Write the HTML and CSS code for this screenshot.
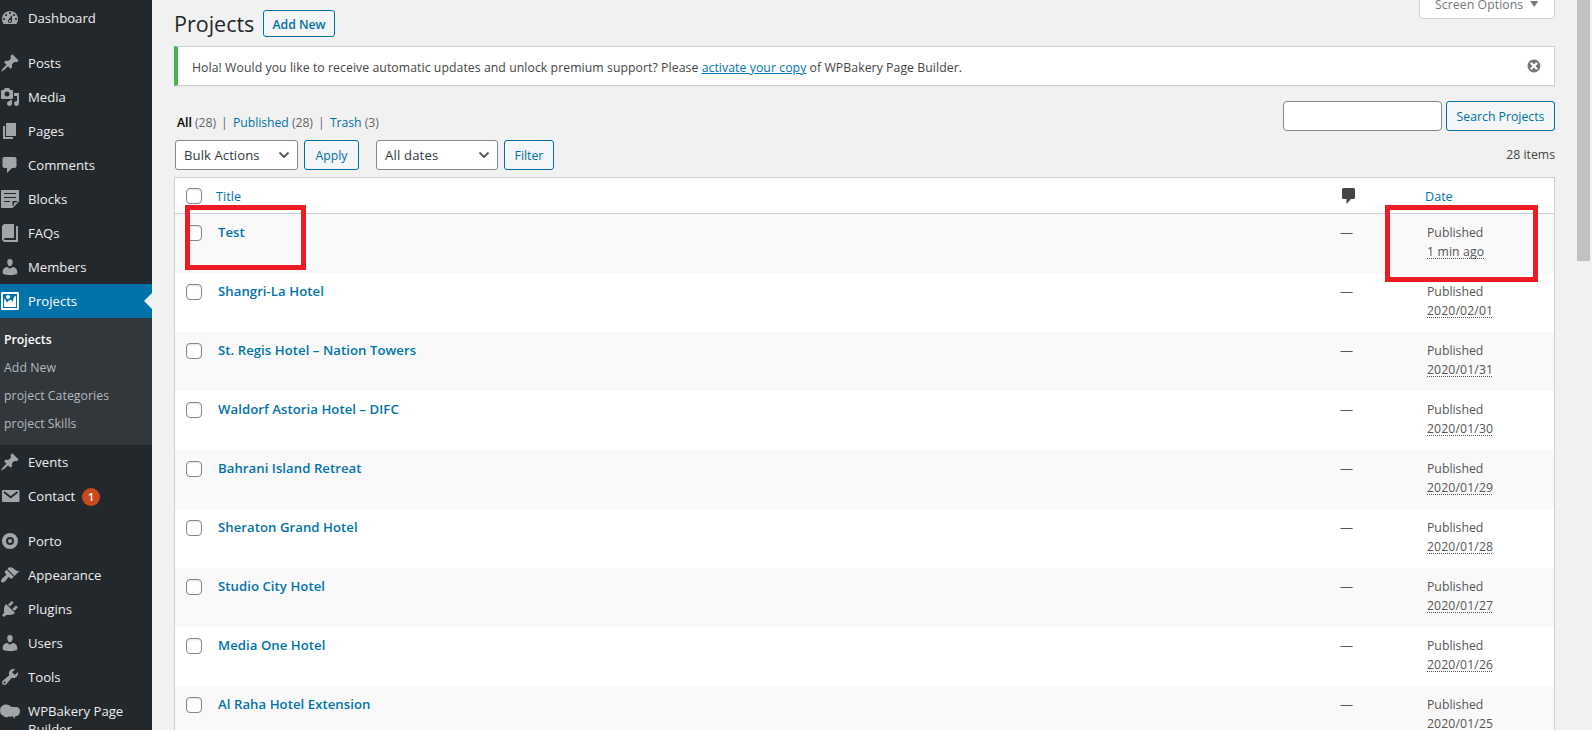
FILE: index.html
```
<!DOCTYPE html>

<html lang="en">

<head>
    <meta charset="utf-8">
    <title>Projects</title>
    <link rel="stylesheet" href="styles.css">
</head>

<body>
    <div class="sidebar">
        <ul class="menu">
            <li><a class="menuItem"><svg class="icon" viewBox="0 0 20 20"><path fill-rule="evenodd" d="M3.76 16h12.48c1.1-1.37 1.76-3.11 1.76-5 0-4.42-3.58-8-8-8s-8 3.58-8 8c0 1.89.66 3.63 1.76 5zM10 4c.55 0 1 .45 1 1s-.45 1-1 1-1-.45-1-1 .45-1 1-1zM6 6c.55 0 1 .45 1 1s-.45 1-1 1-1-.45-1-1 .45-1 1-1zm8 0c.55 0 1 .45 1 1s-.45 1-1 1-1-.45-1-1 .45-1 1-1zm-5.37 5.55L12 7v6c0 1.1-.9 2-2 2s-2-.9-2-2c0-.57.24-1.08.63-1.45zM4 10c.55 0 1 .45 1 1s-.45 1-1 1-1-.45-1-1 .45-1 1-1zm12 0c.55 0 1 .45 1 1s-.45 1-1 1-1-.45-1-1 .45-1 1-1zm-5 3c0-.55-.45-1-1-1s-1 .45-1 1 .45 1 1 1 1-.45 1-1z"/></svg><span>Dashboard</span></a></li>
            <li class="separator"></li>
            <li><a class="menuItem"><svg class="icon" viewBox="0 0 20 20"><path d="M10.44 3.02l1.82-1.82 6.36 6.35-1.83 1.82c-1.05-.68-2.48-.57-3.41.36l-.75.75c-.92.93-1.04 2.35-.35 3.41l-1.83 1.82-2.41-2.41-2.8 2.79c-.42.42-3.38 2.71-3.8 2.29s1.86-3.39 2.28-3.81l2.79-2.79L4.1 9.36l1.83-1.82c1.05.69 2.48.57 3.4-.36l.75-.75c.93-.92 1.05-2.35.36-3.41z"/></svg><span>Posts</span></a></li>
            <li><a class="menuItem"><svg class="icon" viewBox="0 0 20 20"><path fill-rule="evenodd" d="M13 11V4c0-.55-.45-1-1-1h-1.67L9 1H5L3.67 3H2c-.55 0-1 .45-1 1v7c0 .55.45 1 1 1h10c.55 0 1-.45 1-1zM7 4.5c1.38 0 2.5 1.12 2.5 2.5S8.38 9.5 7 9.5 4.5 8.38 4.5 7 5.62 4.5 7 4.5zM14 6h5v10.5c0 1.38-1.12 2.5-2.5 2.5S14 17.88 14 16.5s1.12-2.5 2.5-2.5c.17 0 .34.02.5.05V9h-3V6zm-4 8.05V13h2v3.5c0 1.38-1.12 2.5-2.5 2.5S7 17.88 7 16.5 8.12 14 9.5 14c.17 0 .34.02.5.05z"/></svg><span>Media</span></a></li>
            <li><a class="menuItem"><svg class="icon" viewBox="0 0 20 20"><path d="M6 15V2h10v13H6zm-1 1h8v2H3V5h2v11z"/></svg><span>Pages</span></a></li>
            <li><a class="menuItem"><svg class="icon" viewBox="0 0 20 20"><path d="M4.5 2h10c1.1 0 2 .9 2 2v7c0 1.1-.9 2-2 2H12l-5 5v-5H4.500c-1.1 0-2-.9-2-2V4c0-1.100.9-2 2-2z"/></svg><span>Comments</span></a></li>
            <li><a class="menuItem"><svg class="icon" viewBox="0 0 20 20"><path fill-rule="evenodd" d="M1 1h18v11.500L12.500 19H1zM4 4v1h12V4zM4 8v1h12V8zM4 12v1h6v-1zM12.500 12v5.200l1.500-1.400V13.500h2.300l1.500-1.500z"/></svg><span>Blocks</span></a></li>
            <li><a class="menuItem"><svg class="icon" viewBox="0 0 20 20"><path d="M16 3h2v16H5c-1.660 0-3-1.340-3-3V4c0-1.660 1.340-3 3-3h9v14H5c-.55 0-1 .45-1 1s.45 1 1 1h11V3z"/></svg><span>FAQs</span></a></li>
            <li><a class="menuItem"><svg class="icon" viewBox="0 0 20 20"><path d="M10 9.250c-2.270 0-2.730-3.440-2.730-3.440C7 4.020 7.820 2 9.970 2c2.160 0 2.980 2.020 2.710 3.810 0 0-.41 3.440-2.680 3.440zm0 2.570L12.720 10c2.390 0 4.520 2.330 4.520 4.530v2.490s-3.650 1.130-7.240 1.130c-3.650 0-7.240-1.130-7.240-1.130v-2.490c0-2.250 1.940-4.480 4.470-4.480z"/></svg><span>Members</span></a></li>
            <li><a class="menuItem current"><svg class="icon" viewBox="0 0 20 20"><path fill-rule="evenodd" d="M2.250 1h15.500c.69 0 1.250.56 1.250 1.250v15.500c0 .69-.56 1.250-1.250 1.250H2.250C1.560 19 1 18.440 1 17.750V2.250C1 1.560 1.560 1 2.250 1zM17 17V3H3v14h14zM10 6c0-1.100-.9-2-2-2s-2 .9-2 2 .9 2 2 2 2-.9 2-2zm3 5s0-6 3-6v10c0 .55-.45 1-1 1H5c-.55 0-1-.45-1-1V8c2 0 3 4 3 4s1-3 3-3 3 2 3 2z"/></svg><span>Projects</span></a>
                <ul class="submenu">
                    <li class="active">Projects</li>
                    <li>Add New</li>
                    <li>project Categories</li>
                    <li>project Skills</li>
                </ul>
            </li>
            <li><a class="menuItem"><svg class="icon" viewBox="0 0 20 20"><path d="M10.440 3.020l1.820-1.820 6.360 6.350-1.830 1.820c-1.050-.68-2.480-.57-3.410.36l-.75.75c-.92.93-1.040 2.350-.35 3.410l-1.830 1.820-2.410-2.410-2.800 2.790c-.42.42-3.380 2.710-3.800 2.290s1.860-3.390 2.280-3.810l2.790-2.790L4.100 9.360l1.830-1.820c1.050.69 2.480.57 3.400-.36l.75-.75c.93-.92 1.050-2.350.36-3.410z"/></svg><span>Events</span></a></li>
            <li><a class="menuItem"><svg class="icon" viewBox="0 0 20 20"><rect x="2" y="4" width="17.500" height="12" rx="1"/><path class="fold" d="M4 6l6.700 5.300L17.500 6"/></svg><span>Contact</span><span class="badge">1</span></a></li>
            <li class="separator"></li>
            <li><a class="menuItem"><svg class="icon" viewBox="0 0 20 20"><circle class="ring" cx="10" cy="10" r="6"/><circle cx="10" cy="10" r="2"/></svg><span>Porto</span></a></li>
            <li><a class="menuItem"><svg class="icon" viewBox="0 0 20 20"><path d="M14.480 11.060L7.410 3.990l1.500-1.500c.5-.56 2.300-.47 3.510.32 1.210.8 1.430 1.280 2.910 2.100 1.180.64 2.450 1.260 4.450.85zm-.71.71L6.700 4.700 4.930 6.470c-.39.39-.39 1.020 0 1.410l1.060 1.060c.39.39.39 1.030 0 1.420-.6.6-1.430 1.110-2.210 1.690-.35.26-.7.53-1.010.84C1.430 14.230.4 16.080 1.400 17.070c.99 1 2.840-.03 4.180-1.360.31-.31.58-.66.85-1.020.57-.78 1.080-1.610 1.690-2.210.39-.39 1.020-.39 1.410 0l1.060 1.060c.39.39 1.020.39 1.410 0z"/></svg><span>Appearance</span></a></li>
            <li><a class="menuItem"><svg class="icon" viewBox="0 0 20 20"><path d="M13.110 4.360L9.870 7.600 8 5.730l3.240-3.240c.35-.34 1.050-.2 1.560.32.52.51.66 1.210.31 1.550zm-8 1.770l.91-1.120 9.010 9.010-1.190.84c-.71.71-2.630 1.160-3.820 1.160H6.140L4.900 17.260c-.59.59-1.540.59-2.120 0-.59-.58-.59-1.530 0-2.120l1.240-1.240v-3.880c0-1.130.4-3.190 1.090-3.890zm7.260 3.970l3.240-3.240c.34-.35 1.040-.21 1.550.31.52.51.66 1.210.31 1.550l-3.240 3.250z"/></svg><span>Plugins</span></a></li>
            <li><a class="menuItem"><svg class="icon" viewBox="0 0 20 20"><path d="M10 9.250c-2.270 0-2.730-3.440-2.730-3.440C7 4.020 7.820 2 9.970 2c2.160 0 2.980 2.020 2.710 3.810 0 0-.41 3.440-2.680 3.440zm0 2.570L12.720 10c2.390 0 4.520 2.330 4.520 4.530v2.490s-3.650 1.130-7.240 1.130c-3.650 0-7.240-1.130-7.240-1.130v-2.490c0-2.250 1.940-4.480 4.470-4.480z"/></svg><span>Users</span></a></li>
            <li><a class="menuItem"><svg class="icon" viewBox="0 0 20 20"><path fill-rule="evenodd" d="M16.680 9.770c-1.340 1.340-3.300 1.670-4.950.99l-5.410 6.520c-.99.99-2.590.99-3.580 0s-.99-2.590 0-3.570l6.520-5.420c-.68-1.650-.35-3.610.99-4.950 1.280-1.280 3.120-1.620 4.720-1.060l-2.890 2.890 2.820 2.820 2.860-2.870c.53 1.580.18 3.390-1.080 4.650zM3.810 16.210c.4.39 1.040.39 1.430 0 .4-.4.4-1.040 0-1.430-.39-.4-1.030-.4-1.430 0-.39.39-.39 1.030 0 1.430z"/></svg><span>Tools</span></a></li>
            <li><a class="menuItem"><svg class="icon" viewBox="0 0 20 20"><path d="M0 9.500C0 6 2.700 3.500 6 3.500c2.300 0 4.200 1 5.200 2.600 1-.5 2.200-.3 3 .2 1.800-1 5.800-.3 5.800 4 0 3.200-2.300 5-5 5.200l-.3 2.300-2-2.500c-1.200.5-2.700.6-4.200.1C5.500 17 4 16 3.700 14.800 1.500 14.500 0 12.500 0 9.500z"/></svg><span>WPBakery Page Builder</span></a></li>
        </ul>
    </div>
    <div class="content">
        <div class="topBar">
            <h1 class="pageTitle">Projects</h1>
            <a class="button addNew">Add New</a>
            <div class="screenOptions">Screen Options <i class="caret"></i></div>
        </div>
        <div class="notice">
            <p>Hola! Would you like to receive automatic updates and unlock premium support? Please <a class="underlined">activate your copy</a> of WPBakery Page Builder.</p>
            <svg class="dismiss" viewBox="0 0 20 20"><path d="M10 2c4.420 0 8 3.580 8 8s-3.580 8-8 8-8-3.580-8-8 3.580-8 8-8zm5 11l-3-3 3-3-2-2-3 3-3-3-2 2 3 3-3 3 2 2 3-3 3 3z"/></svg>
        </div>
        <div class="listTop">
            <div class="filters">
                <div class="views"><b>All</b> (28) <i>|</i> <a>Published</a> (28) <i>|</i> <a>Trash</a> (3)</div>
                <div class="actions">
                    <div class="select bulk">Bulk Actions<svg viewBox="0 0 12 8"><path d="M1.500 1.500L6 6l4.500-4.500"/></svg></div>
                    <a class="button apply">Apply</a>
                    <div class="select dates">All dates<svg viewBox="0 0 12 8"><path d="M1.500 1.500L6 6l4.500-4.500"/></svg></div>
                    <a class="button filter">Filter</a>
                </div>
            </div>
            <div class="searchSide">
                <div class="searchBox">
                    <input type="text">
                    <a class="button search">Search Projects</a>
                </div>
                <div class="count">28 items</div>
            </div>
        </div>
        <div class="table">
            <div class="row head">
                <span class="check"></span>
                <a class="title">Title</a>
                <span class="comments"><svg viewBox="0 0 13 16"><path d="M1.500 0h10Q13 0 13 1.500v8Q13 11 11.500 11H9l-4.500 5v-5h-3Q0 11 0 9.500v-8Q0 0 1.500 0z"/></svg></span>
                <a class="date">Date</a>
            </div>
            <div class="row">
                <span class="check"></span>
                <a class="title">Test</a>
                <span class="comments">—</span>
                <div class="date">Published<br><abbr>1 min ago</abbr></div>
            </div>
            <div class="row">
                <span class="check"></span>
                <a class="title">Shangri-La Hotel</a>
                <span class="comments">—</span>
                <div class="date">Published<br><abbr>2020/02/01</abbr></div>
            </div>
            <div class="row">
                <span class="check"></span>
                <a class="title">St. Regis Hotel – Nation Towers</a>
                <span class="comments">—</span>
                <div class="date">Published<br><abbr>2020/01/31</abbr></div>
            </div>
            <div class="row">
                <span class="check"></span>
                <a class="title">Waldorf Astoria Hotel – DIFC</a>
                <span class="comments">—</span>
                <div class="date">Published<br><abbr>2020/01/30</abbr></div>
            </div>
            <div class="row">
                <span class="check"></span>
                <a class="title">Bahrani Island Retreat</a>
                <span class="comments">—</span>
                <div class="date">Published<br><abbr>2020/01/29</abbr></div>
            </div>
            <div class="row">
                <span class="check"></span>
                <a class="title">Sheraton Grand Hotel</a>
                <span class="comments">—</span>
                <div class="date">Published<br><abbr>2020/01/28</abbr></div>
            </div>
            <div class="row">
                <span class="check"></span>
                <a class="title">Studio City Hotel</a>
                <span class="comments">—</span>
                <div class="date">Published<br><abbr>2020/01/27</abbr></div>
            </div>
            <div class="row">
                <span class="check"></span>
                <a class="title">Media One Hotel</a>
                <span class="comments">—</span>
                <div class="date">Published<br><abbr>2020/01/26</abbr></div>
            </div>
            <div class="row">
                <span class="check"></span>
                <a class="title">Al Raha Hotel Extension</a>
                <span class="comments">—</span>
                <div class="date">Published<br><abbr>2020/01/25</abbr></div>
            </div>
        </div>
    </div>
    <div class="mark markTitle"></div>
    <div class="mark markDate"></div>
    <div class="scrollThumb"></div>
</body>

</html>
```
FILE: styles.css
```
* {
    box-sizing: border-box;
}

body {
    position: relative;
    display: flex;
    margin: 0;
    height: 730px;
    overflow: hidden;
    background-color: #f1f1f1;
    color: #444;
    font-family: "Open Sans", "Noto Sans", sans-serif;
    font-size: 12.25px;
    line-height: 19px;
}

ul {
    margin: 0;
    padding: 0;
    list-style: none;
}

a {
    color: #0073aa;
}

.sidebar {
    flex: none;
    width: 152px;
    height: 730px;
    padding-top: 1px;
    overflow: hidden;
    background-color: #23282d;
}

.menuItem {
    position: relative;
    display: flex;
    align-items: flex-start;
    gap: 8px;
    min-height: 34px;
    padding: 8px 8px 8px 0;
    color: #eee;
    font-size: 13.15px;
    line-height: 18px;
}

.icon {
    flex: none;
    width: 20px;
    height: 20px;
    margin: -1px 0;
    fill: #a0a5aa;
}

.icon .fold {
    fill: none;
    stroke: #23282d;
    stroke-width: 1.8;
}

.icon .ring {
    fill: none;
    stroke: #a0a5aa;
    stroke-width: 4;
}

.current {
    background-color: #0073aa;
    color: #fff;
}

.current .icon {
    fill: #fff;
}

.current::after {
    content: "";
    position: absolute;
    right: 0;
    top: 9px;
    border: 8px solid transparent;
    border-left-width: 0;
    border-right-color: #f1f1f1;
}

.separator {
    height: 11px;
}

.submenu {
    padding: 8px 0 7px 4px;
    background-color: #32373c;
    color: #b4b9be;
    font-size: 12.25px;
    letter-spacing: .07px;
    line-height: 28px;
}

.submenu .active {
    color: #fff;
    font-weight: 600;
    letter-spacing: 0;
}

.badge {
    width: 18px;
    height: 18px;
    margin: 1px 0 -1px -1px;
    border-radius: 9px;
    background-color: #ca4a1f;
    color: #fff;
    font-size: 11px;
    font-weight: 600;
    text-align: center;
}

.content {
    flex: none;
    width: 1381px;
    margin-left: 22px;
}

.topBar {
    display: flex;
    height: 46px;
}

.pageTitle {
    width: 89px;
    margin: 0;
    padding-top: 8px;
    color: #23282d;
    font-size: 21.5px;
    font-weight: 400;
    line-height: 32px;
}

.button {
    display: block;
    height: 30px;
    border: 1px solid #0071a1;
    border-radius: 3px;
    background-color: #f3f5f6;
    color: #0071a1;
    line-height: 30px;
    text-align: center;
    white-space: nowrap;
}

.addNew {
    width: 72px;
    height: 27px;
    margin-top: 10px;
    font-weight: 600;
    line-height: 27px;
}

.screenOptions {
    display: flex;
    gap: 7px;
    width: 136px;
    height: 27px;
    margin: -8px 0 0 auto;
    padding-left: 15px;
    border: 1px solid #ccd0d4;
    border-radius: 0 0 4px 4px;
    background-color: #fff;
    color: #72777c;
    letter-spacing: .07px;
    line-height: 24px;
}

.caret {
    width: 8px;
    height: 6px;
    margin-top: 8px;
    background-color: #72777c;
    clip-path: polygon(0 0, 100% 0, 50% 100%);
}

.notice {
    display: flex;
    justify-content: space-between;
    height: 40px;
    padding: 0 12px 0 14px;
    border: 1px solid #ccd0d4;
    border-left: 4px solid #46b450;
    background-color: #fff;
    box-shadow: 0 1px 1px rgba(0, 0, 0, .04);
}

.notice p {
    margin: 0;
    letter-spacing: .065px;
    line-height: 41px;
}

.underlined {
    text-decoration: underline;
}

.dismiss {
    width: 16px;
    height: 16px;
    margin-top: 11px;
    fill: #72777c;
}

.listTop {
    display: flex;
    justify-content: space-between;
    height: 91px;
}

.views {
    padding: 27px 0 0 3px;
    color: #666;
    letter-spacing: -.05px;
    white-space: nowrap;
}

.views b {
    color: #000;
    font-weight: 600;
}

.views i {
    margin: 0 2px;
    font-style: normal;
}

.actions {
    display: flex;
    padding: 8px 0 0 1px;
}

.select {
    display: flex;
    align-items: center;
    justify-content: space-between;
    height: 30px;
    padding: 0 7px 0 8px;
    border: 1px solid #7e8993;
    border-radius: 3px;
    background-color: #fff;
    color: #32373c;
    font-size: 13.15px;
}

.select svg {
    width: 12px;
    height: 8px;
    fill: none;
    stroke: #555;
    stroke-width: 1.8;
}

.bulk {
    width: 123px;
    letter-spacing: .05px;
}

.dates {
    width: 122px;
    letter-spacing: .15px;
}

.apply {
    width: 55px;
    margin: 0 17px 0 6px;
}

.filter {
    width: 50px;
    margin-left: 6px;
}

.searchSide {
    padding-top: 15px;
    text-align: right;
}

.searchBox {
    display: flex;
    gap: 4px;
}

.searchBox input {
    width: 159px;
    height: 30px;
    border: 1px solid #7e8993;
    border-radius: 4px;
    background-color: #fff;
}

.search {
    width: 109px;
}

.count {
    margin-top: 14px;
    color: #444;
}

.table {
    border: 1px solid #ccd0d4;
    background-color: #fff;
}

.row {
    display: flex;
    height: 59px;
    padding: 9px 0 0 11px;
    color: #555;
}

.row:nth-child(even) {
    background-color: #f9f9f9;
}

.head {
    height: 36px;
    border-bottom: 1px solid #ccd0d4;
}

.check {
    width: 16px;
    height: 16px;
    margin-top: 2px;
    border: 1px solid #7e8993;
    border-radius: 4px;
    background-color: #fff;
    box-shadow: inset 0 1px 2px rgba(0, 0, 0, .1);
}

.head .check {
    margin-top: 1px;
}

.title {
    width: 1122px;
    margin-left: 16px;
    font-size: 13.15px;
    font-weight: 600;
    letter-spacing: .06px;
}

.head .title {
    margin-left: 14px;
    width: 1126px;
    font-size: 12.6px;
    font-weight: 400;
}

.comments {
    width: 87px;
    font-size: 13px;
}

.head .comments {
    width: 83px;
}

.comments svg {
    display: block;
    width: 13px;
    height: 16px;
    margin-top: 1px;
    fill: #444;
}

.head .date {
    font-size: 12.6px;
}

abbr {
    letter-spacing: .12px;
    text-decoration: underline dotted 1px;
    text-underline-offset: 2px;
    text-decoration-skip-ink: none;
}

/* red callouts and the scrollbar lie over the page */
.mark {
    position: absolute;
    top: 205px;
    border: 5px solid #ed1c24;
}

.markTitle {
    left: 185px;
    width: 121px;
    height: 65px;
}

.markDate {
    left: 1385px;
    width: 153px;
    height: 77px;
}

.scrollThumb {
    position: absolute;
    left: 1577px;
    top: 0;
    width: 13px;
    height: 261px;
    background-color: #c1c1c1;
}
```
